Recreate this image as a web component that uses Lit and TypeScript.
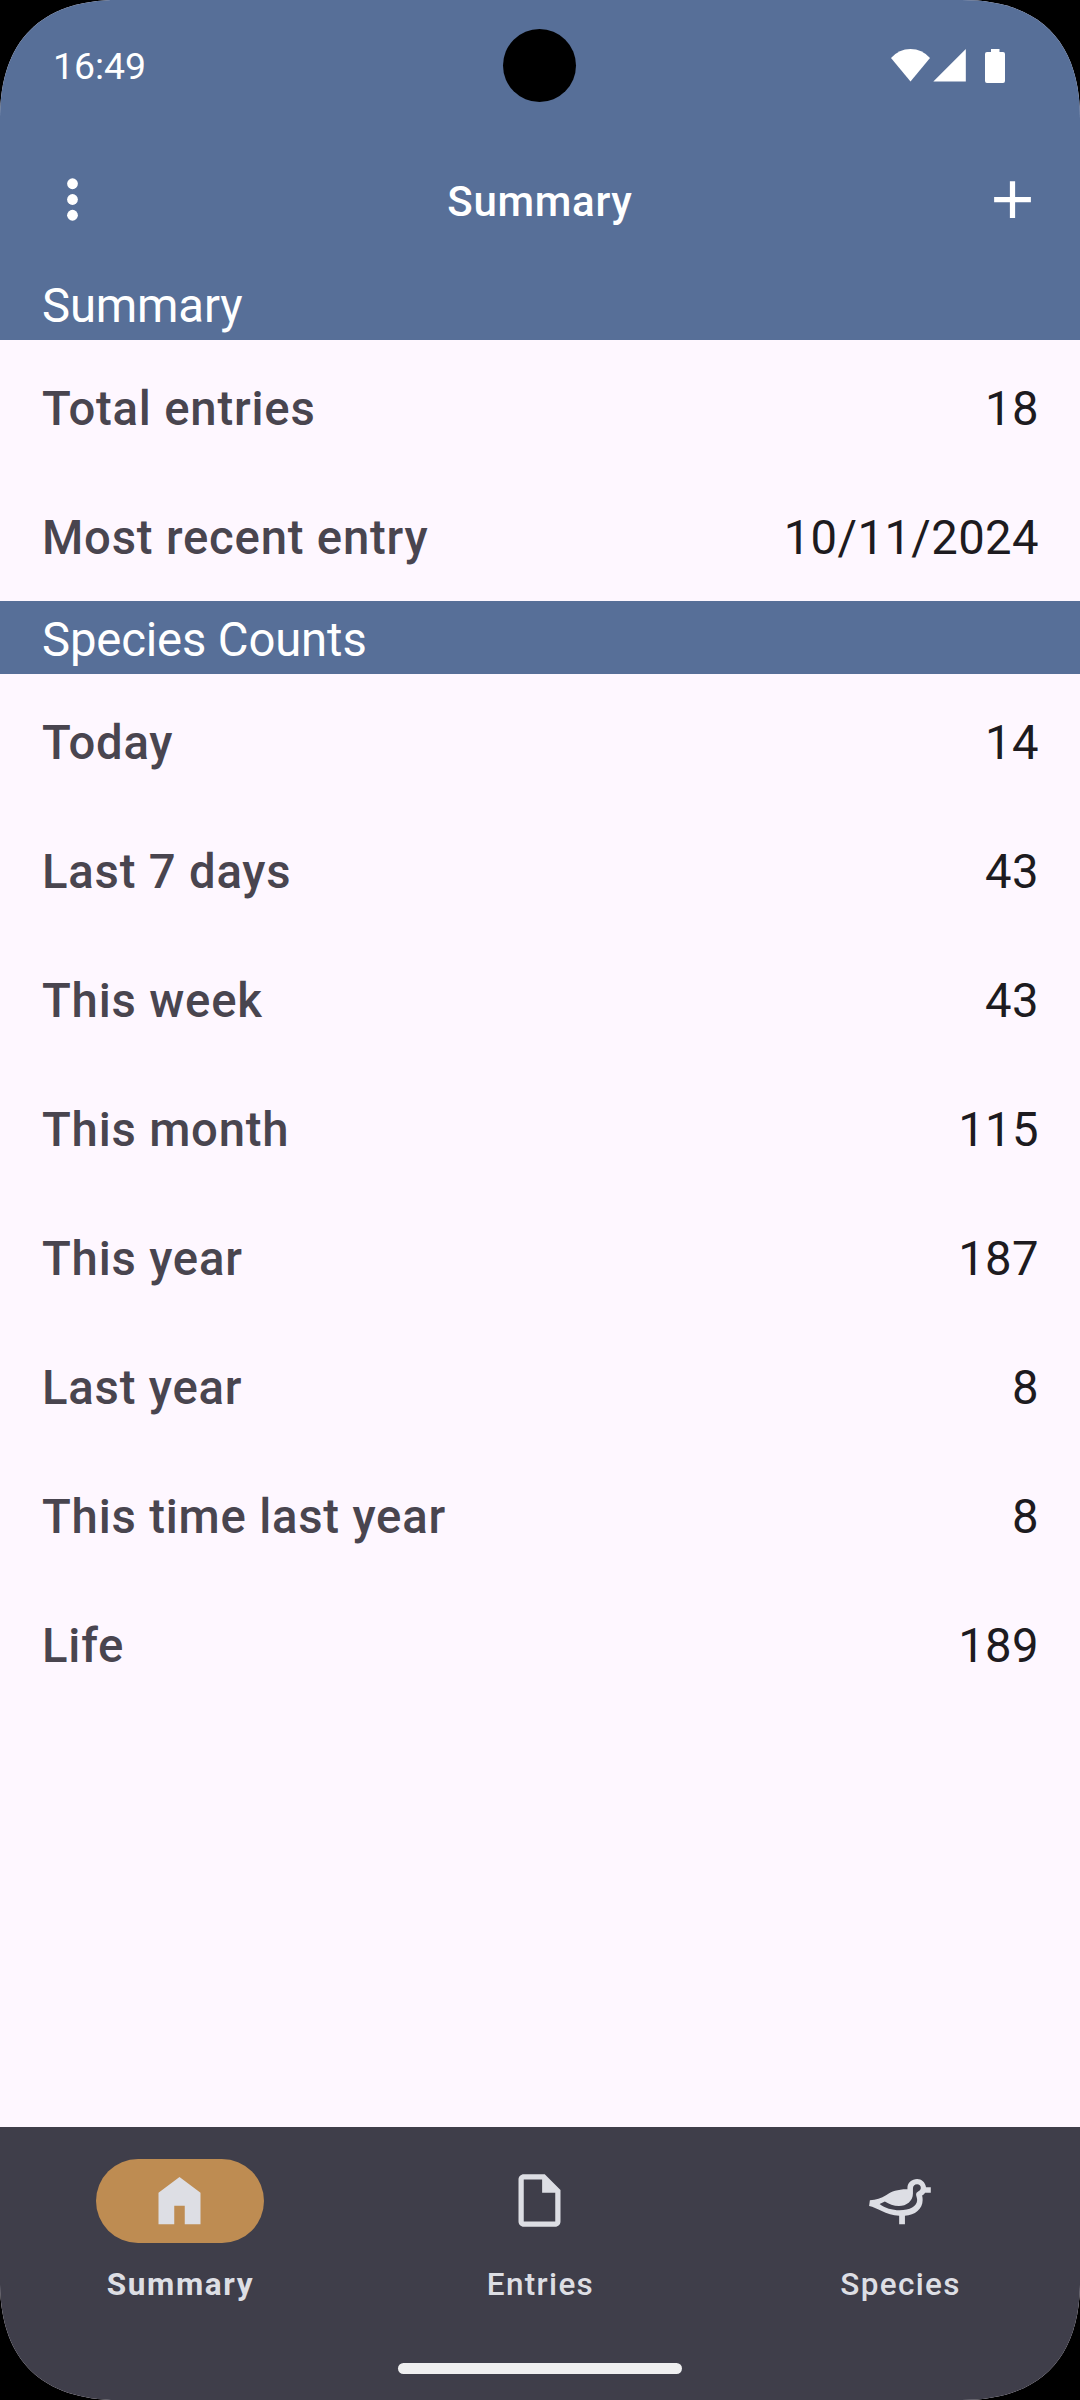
import { LitElement, html, css, svg } from "lit";
import { customElement, property } from "lit/decorators.js";
import { classMap } from "lit/directives/class-map.js";

interface Stat {
  label: string;
  value: string;
}

const SUMMARY: Stat[] = [
  { label: "Total entries", value: "18" },
  { label: "Most recent entry", value: "10/11/2024" },
];

const COUNTS: Stat[] = [
  { label: "Today", value: "14" },
  { label: "Last 7 days", value: "43" },
  { label: "This week", value: "43" },
  { label: "This month", value: "115" },
  { label: "This year", value: "187" },
  { label: "Last year", value: "8" },
  { label: "This time last year", value: "8" },
  { label: "Life", value: "189" },
];

const ICONS = {
  more: svg`<circle cx="12" cy="6" r="2.05"/><circle cx="12" cy="12" r="2.05"/><circle cx="12" cy="18" r="2.05"/>`,
  add: svg`<path d="M19 13h-6v6h-2v-6H5v-2h6V5h2v6h6z"/>`,
  home: svg`<path d="M4 21V9l8-6 8 6v12h-6v-7h-4v7z"/>`,
  file: svg`<path fill-rule="evenodd" d="M14 2H6c-1.1 0-2 .9-2 2v16c0 1.1.9 2 2 2h12c1.1 0 2-.9 2-2V8l-6-6zM6 20V4h7v5h5v11H6z"/>`,
  bird: svg`<path fill-rule="evenodd" transform="translate(.12 0)" d="M.6 11.95C3 11.7 4.8 11.2 6.9 9.9C8.9 8.55 11.3 7.7 14.9 7.75V7.2C14.9 5.2 16.6 3.85 18.6 3.85C20.3 3.85 21.6 5 22 6.95H23.8V9.05H21.6C21.3 9.6 20.9 9.8 20.5 10.1C20.65 10.7 20.7 11.2 20.7 11.8C20.7 15.2 17.8 17.6 13.95 17.8V21H11.75V17.8C9.3 17.7 7.2 17.1 4.9 15.9C3.2 15 1.9 14.4.3 14.05ZM4.3 13.3C6.3 14.8 9.1 15.7 11.9 15.7C15.8 15.7 18.6 14.2 18.6 11.8C18.6 10.9 18.2 10.4 18.2 9.7C18.2 8.4 20 8.5 20 7.2C20 6.4 19.4 5.85 18.6 5.85C17.6 5.85 17 6.5 17 7.4V9.3C17 12.2 14.5 14.1 11.7 14.1C9.6 14.1 7.9 13.4 6.3 12.4Z"/>`,
};

@customElement("section-header")
class SectionHeader extends LitElement {
  static styles = css`
    :host {
      display: block;
      box-sizing: border-box;
      height: 73px;
      padding: 11px 42px 0;
      background: #576f98;
      color: #fff;
      font-size: 47.25px;
      line-height: 56px;
      letter-spacing: -0.15px;
    }
  `;
  render() {
    return html`<slot></slot>`;
  }
}

@customElement("stat-list")
class StatList extends LitElement {
  @property({ attribute: false }) rows: Stat[] = [];

  static styles = css`
    :host {
      display: block;
      padding-top: 3px;
    }
    .row {
      display: flex;
      align-items: center;
      justify-content: space-between;
      box-sizing: border-box;
      height: 129px;
      padding: 2px 41px 0 42px;
      font-size: 47.25px;
      letter-spacing: 0.39px;
    }
    .label {
      color: #49454f;
      font-weight: 500;
      letter-spacing: 0.8px;
    }
    .value {
      color: #1d1b20;
    }
  `;
  render() {
    return this.rows.map(
      (r) => html`<div class="row"><span class="label">${r.label}</span><span class="value">${r.value}</span></div>`
    );
  }
}

@customElement("nav-item")
class NavItem extends LitElement {
  @property() icon: "home" | "file" | "bird" = "home";
  @property() label = "";
  @property({ type: Boolean }) active = false;

  static styles = css`
    :host {
      flex: 1;
      display: flex;
      flex-direction: column;
      align-items: center;
      color: #dddee4;
    }
    .pill {
      display: flex;
      align-items: center;
      justify-content: center;
      width: 168px;
      height: 84px;
      padding-right: 1px;
      padding-bottom: 1px;
      box-sizing: border-box;
      border-radius: 42px;
    }
    .pill.active {
      background: #be8c52;
    }
    .icon {
      width: 63px;
      height: 63px;
      fill: currentColor;
    }
    .label {
      margin-top: 23px;
      padding-left: 1px;
      font-size: 31.5px;
      line-height: 38px;
      letter-spacing: 1.3125px;
      font-weight: 500;
    }
    .label.active {
      font-weight: 700;
      letter-spacing: 1.6px;
    }
  `;
  render() {
    const state = { active: this.active };
    return html`
      <div class=${classMap({ pill: true, ...state })}>
        <svg class="icon" viewBox="0 0 24 24">${ICONS[this.icon]}</svg>
      </div>
      <span class=${classMap({ label: true, ...state })}>${this.label}</span>
    `;
  }
}

@customElement("app-root")
class AppRoot extends LitElement {
  static styles = css`
    :host {
      display: block;
      width: 1080px;
      height: 2400px;
      background: #000;
      font-family: Roboto, "Liberation Sans", sans-serif;
    }
    .screen {
      position: relative;
      display: flex;
      flex-direction: column;
      height: 2400px;
      background: #fef7ff;
      clip-path: path(
        "M0 118C0 41 41 0 118 0H962C1039 0 1080 41 1080 118V2282C1080 2359 1039 2400 962 2400H118C41 2400 0 2359 0 2282Z"
      );
    }
    .status {
      display: flex;
      align-items: center;
      justify-content: space-between;
      box-sizing: border-box;
      height: 132px;
      padding: 0 75px 0 53px;
      background: #576f98;
      color: #fff;
      font-size: 37.4px;
    }
    .camera {
      position: absolute;
      left: 503px;
      top: 29px;
      width: 73px;
      height: 73px;
      border-radius: 50%;
      background: #000;
    }
    .signals {
      display: block;
      width: 114px;
      height: 34px;
      fill: #fff;
    }
    .bar {
      display: flex;
      align-items: center;
      justify-content: space-between;
      box-sizing: border-box;
      height: 135px;
      padding: 0 36px 0 41px;
      background: #576f98;
      color: #fff;
    }
    .icon {
      width: 63px;
      height: 63px;
      fill: #fff;
    }
    .title {
      margin: 3px 0 0;
      padding-right: 5px;
      font-size: 42px;
      font-weight: 500;
      letter-spacing: 0.7px;
    }
    .nav {
      margin-top: auto;
      box-sizing: border-box;
      height: 273px;
      padding-top: 32px;
      background: #3f3e4a;
    }
    .items {
      display: flex;
    }
    .handle {
      width: 284px;
      height: 11px;
      margin: 59px auto 0;
      border-radius: 5.5px;
      background: #efeff0;
    }
  `;
  render() {
    return html`
      <div class="screen">
        <div class="status">
          <span>16:49</span>
          <svg class="signals" viewBox="891 49 114 34">
            <path d="M891 58Q899 49 910.5 49T930 58L910.5 81.6Z" />
            <path d="M933.3 81.6L965.8 49V81.6Z" />
            <path
              d="M991 49H999.5V52H1003Q1005 52 1005 54V81Q1005 83 1003 83H987Q985 83 985 81V54Q985 52 987 52H991Z"
            />
          </svg>
        </div>
        <div class="camera"></div>
        <header class="bar">
          <svg class="icon" viewBox="0 0 24 24">${ICONS.more}</svg>
          <h1 class="title">Summary</h1>
          <svg class="icon" viewBox="0 0 24 24">${ICONS.add}</svg>
        </header>
        <section-header>Summary</section-header>
        <stat-list .rows=${SUMMARY}></stat-list>
        <section-header>Species Counts</section-header>
        <stat-list .rows=${COUNTS}></stat-list>
        <nav class="nav">
          <div class="items">
            <nav-item icon="home" label="Summary" active></nav-item>
            <nav-item icon="file" label="Entries"></nav-item>
            <nav-item icon="bird" label="Species"></nav-item>
          </div>
          <div class="handle"></div>
        </nav>
      </div>
    `;
  }
}
